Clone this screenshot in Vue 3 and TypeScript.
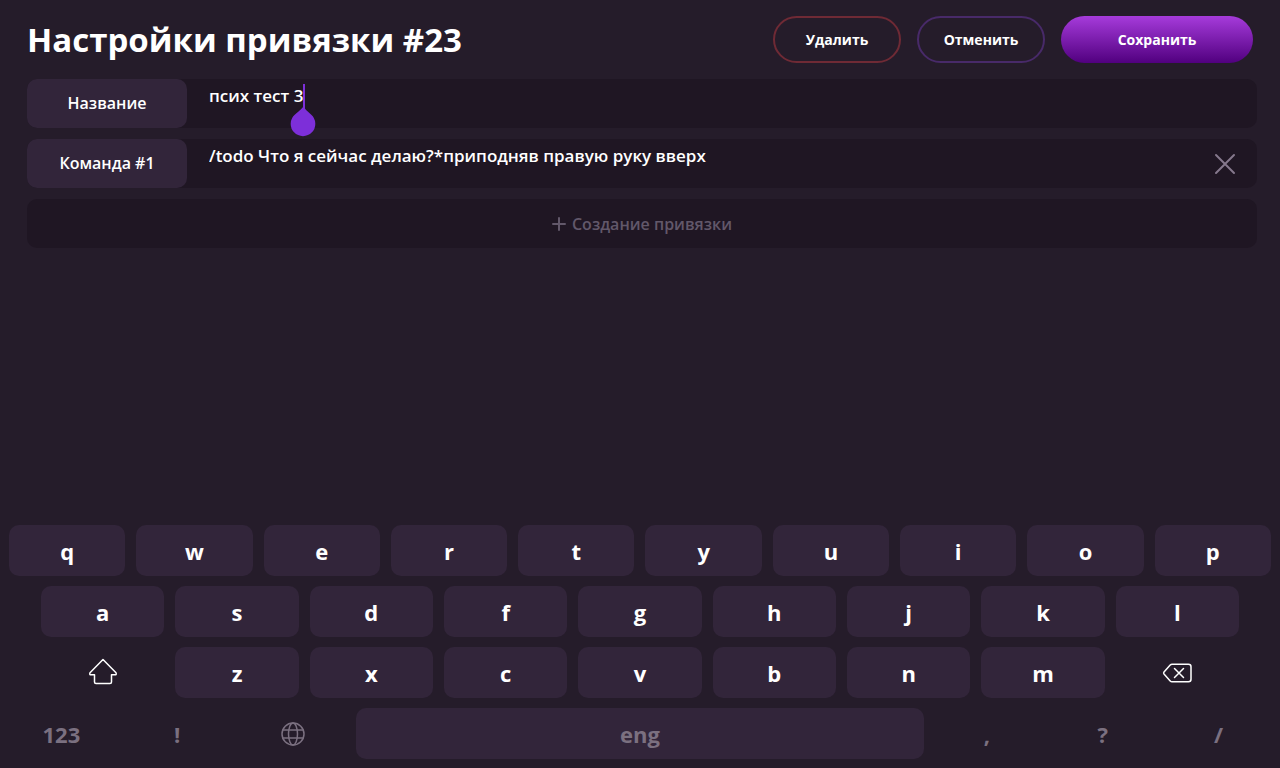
<script setup lang="ts">
import { ref } from 'vue'

const title = ref('псих тест 3')
const command = ref('/todo Что я сейчас делаю?*приподняв правую руку вверх')

const topKeys: string[] = [...'qwertyuiop']
const homeKeys: string[] = [...'asdfghjkl']
const lowKeys: string[] = [...'zxcvbnm']
const punctuation: string[] = [',', '?', '/']
</script>

<template>
  <div class="page">
    <header class="header">
      <h1>Настройки привязки #23</h1>
      <div class="actions">
        <button type="button" class="action danger">Удалить</button>
        <button type="button" class="action cancel">Отменить</button>
        <button type="button" class="action save">Сохранить</button>
      </div>
    </header>

    <main class="form">
      <div class="row">
        <label class="label" for="bind-title">Название</label>
        <div class="field">
          <div class="entry">
            <input id="bind-title" v-model="title" class="text sized" type="text" />
            <svg class="caret" viewBox="0 0 26 53" width="26" height="53" aria-hidden="true">
              <path d="M13 0h2v26h-2z" />
              <path d="M13.500 22c1 2.500 3 4.500 7.500 8.500a12.300 12.300 0 1 1-16 0c5-4.500 7.500-6 8.500-8.500z" />
            </svg>
          </div>
        </div>
      </div>

      <div class="row">
        <label class="label" for="bind-command">Команда #1</label>
        <div class="field">
          <input id="bind-command" v-model="command" class="text wide" type="text" />
          <button type="button" class="remove" aria-label="Удалить команду">
            <svg viewBox="0 0 22 22" width="22" height="22" aria-hidden="true">
              <path d="M2 2l18 18M20 2L2 20" />
            </svg>
          </button>
        </div>
      </div>

      <button type="button" class="create">
        <svg viewBox="0 0 14 14" width="14" height="14" aria-hidden="true">
          <path d="M7 1v12M1 7h12" />
        </svg>
        Создание привязки
      </button>
    </main>

    <section class="keyboard" aria-label="Клавиатура">
      <div class="keys">
        <button v-for="k in topKeys" :key="k" type="button" class="key">{{ k }}</button>
      </div>
      <div class="keys inset">
        <button v-for="k in homeKeys" :key="k" type="button" class="key">{{ k }}</button>
      </div>
      <div class="keys inset">
        <button type="button" class="key bare" aria-label="Shift">
          <svg viewBox="0 0 30 30" width="30" height="30" aria-hidden="true">
            <path d="M15 1.500L28 14.800q.8 2-1 2h-3.500V24q0 1.500-1.500 1.500H8Q6.500 25.500 6.500 24v-7.200H3q-1.800 0-1-2z" />
          </svg>
        </button>
        <button v-for="k in lowKeys" :key="k" type="button" class="key">{{ k }}</button>
        <button type="button" class="key bare" aria-label="Backspace">
          <svg viewBox="0 0 30 20" width="30" height="20" aria-hidden="true">
            <path d="M10 1.200H26.500q2.500 0 2.500 2.500v12.600q0 2.500-2.500 2.500H10q-1 0-1.800-.9L2 11q-.8-1 0-2l6.200-6.900q.8-.9 1.800-.9z" />
            <path d="M12.500 5.500l9 9M21.500 5.500l-9 9" />
          </svg>
        </button>
      </div>
      <div class="keys">
        <button type="button" class="key bare muted">123</button>
        <button type="button" class="key bare muted">!</button>
        <button type="button" class="key bare muted" aria-label="Язык">
          <svg viewBox="0 0 24 24" width="24" height="24" aria-hidden="true">
            <circle cx="12" cy="12" r="11" />
            <ellipse cx="12" cy="12" rx="4.500" ry="11" />
            <path d="M2 8h20M2 16h20" />
          </svg>
        </button>
        <button type="button" class="key space muted">eng</button>
        <button v-for="k in punctuation" :key="k" type="button" class="key bare muted">{{ k }}</button>
      </div>
    </section>
  </div>
</template>

<style>
body {
  background: #251c2a;
}
</style>

<style scoped>
.page {
  box-sizing: border-box;
  min-height: 100vh;
  display: flex;
  flex-direction: column;
  background: #251c2a;
  color: #fff;
  font-family: "Open Sans", "Noto Sans", sans-serif;
  font-size: 16px;
  font-weight: 600;
}

button,
input {
  margin: 0;
  padding: 0;
  border: 0;
  background: none;
  color: inherit;
  font: inherit;
}

button {
  cursor: pointer;
}

svg {
  display: block;
  fill: none;
  stroke: currentColor;
  stroke-linecap: round;
  stroke-linejoin: round;
}

.header {
  display: flex;
  align-items: center;
  justify-content: space-between;
  padding: 16px 27px;
}

h1 {
  margin: 0;
  font-size: 33px;
  line-height: 46px;
  font-weight: 700;
}

.actions {
  display: flex;
  gap: 16px;
}

.action {
  box-sizing: border-box;
  width: 128px;
  height: 47px;
  border-radius: 24px;
  font-size: 14px;
  font-weight: 700;
}

.danger {
  border: 2px solid #6f2a35;
}

.cancel {
  border: 2px solid #482a69;
}

.save {
  width: 192px;
  background: linear-gradient(#a63bdb, #51007f);
}

.form {
  flex: 1;
  display: flex;
  flex-direction: column;
  gap: 11px;
  padding: 0 23px 0 27px;
}

.row {
  display: flex;
  height: 49px;
  border-radius: 10px;
  background: #1f1623;
}

.label {
  flex: none;
  width: 160px;
  border-radius: 10px;
  background: #32253a;
  line-height: 49px;
  text-align: center;
}

.field {
  flex: 1;
  min-width: 0;
  display: flex;
  padding: 5px 21px 0 22px;
}

.entry {
  position: relative;
  height: 24px;
}

.text {
  height: 24px;
  font-size: 17px;
  line-height: 24px;
  outline: none;
  caret-color: #7d2fd9;
}

.sized {
  field-sizing: content;
}

.wide {
  flex: 1;
  min-width: 0;
}

.caret {
  position: absolute;
  top: 0;
  right: -13px;
  fill: #7d2fd9;
  stroke: none;
  pointer-events: none;
}

.remove {
  align-self: center;
  padding-bottom: 5px;
  color: #85788c;
}

.remove svg {
  stroke-width: 2;
}

.create {
  display: flex;
  align-items: center;
  justify-content: center;
  gap: 6px;
  height: 49px;
  border-radius: 10px;
  background: #1f1623;
  color: #62586a;
}

.create svg {
  stroke-width: 2;
}

.keyboard {
  display: flex;
  flex-direction: column;
  gap: 10px;
  padding: 16px 9px 9px;
}

.keys {
  display: flex;
  gap: 11px;
}

.inset {
  padding: 0 32px;
}

.key {
  flex: 105 1 0;
  min-width: 0;
  height: 51px;
  display: flex;
  align-items: center;
  justify-content: center;
  border-radius: 10px;
  background: #32253a;
  font-size: 22px;
  line-height: 28px;
  font-weight: 700;
}

.key svg {
  stroke-width: 1.500;
}

.space {
  flex-grow: 568;
}

.bare {
  background: none;
}

.muted {
  color: #7b7080;
}
</style>
